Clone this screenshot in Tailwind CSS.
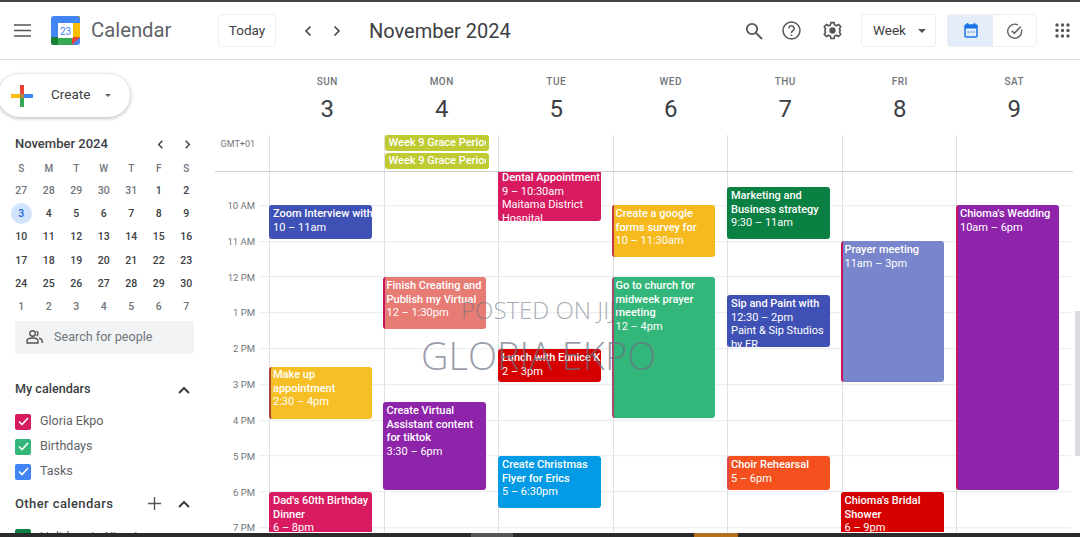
<!DOCTYPE html>
<html lang="en">
<head>
  <meta charset="UTF-8" />
  <title>Calendar</title>
  <script src="https://cdn.jsdelivr.net/npm/@tailwindcss/browser@4"></script>
</head>
<body class="bg-white font-['Roboto',sans-serif] text-[#3c4043] w-[1080px] h-[537px] overflow-hidden relative">
  <div class="h-[2px] bg-[#444]"></div>

  <!-- top bar -->
  <header class="h-[58px] border-b border-[#e0e0e0] flex items-center relative">
    <svg class="ml-[13px] w-[19px] h-[19px]" viewBox="0 0 19 19" fill="none" stroke="#555" stroke-width="1.7"><path d="M1 4h17M1 9.500h17M1 15h17"/></svg>
    <svg class="ml-[19px] w-[29px] h-[29px]" viewBox="0 0 29 29">
      <rect x="0" y="0" width="29" height="29" rx="3" fill="#4285f4"/>
      <rect x="21" y="0" width="8" height="22" fill="#fbbc04"/>
      <rect x="0" y="21" width="22" height="8" rx="2" fill="#34a853"/>
      <path d="M0 21h7v8H3a3 3 0 0 1-3-3z" fill="#188038"/>
      <path d="M7 0h19a3 3 0 0 1 3 3v4H7z" fill="#4285f4"/>
      <path d="M21 21h8l-8 8z" fill="#ea4335"/>
      <rect x="7" y="7" width="15" height="15" fill="#fff"/>
      <text x="14.500" y="18.500" font-size="10" text-anchor="middle" fill="#4285f4" font-family="Roboto">23</text>
    </svg>
    <span class="ml-[11px] text-[20.300px] text-[#5f6368] w-[128px] leading-none">Calendar</span>
    <button class="ml-[-1px] w-[58px] h-[33px] border border-[#eeeeee] rounded-[3px] text-[13.500px] text-[#3c4043]">Today</button>
    <svg class="ml-[25px] w-[14px] h-[14px]" viewBox="0 0 14 14" fill="none" stroke="#444" stroke-width="1.600"><path d="M9.500 2.500 5 7l4.500 4.500"/></svg>
    <svg class="ml-[15px] w-[14px] h-[14px]" viewBox="0 0 14 14" fill="none" stroke="#444" stroke-width="1.600"><path d="M4.500 2.500 9 7l-4.500 4.500"/></svg>
    <span class="ml-[25px] text-[20px] text-[#3c4043] leading-none">November 2024</span>
    <div class="ml-auto flex items-center">
      <svg class="ml-[-1px] w-[18px] h-[18px]" viewBox="0 0 18 18" fill="none" stroke="#555" stroke-width="1.800"><circle cx="7" cy="7" r="5.200"/><path d="m11 11 6 6"/></svg>
      <svg class="ml-[19px] w-[19px] h-[19px]" viewBox="0 0 19 19" fill="none" stroke="#555" stroke-width="1.500"><circle cx="9.500" cy="9.500" r="8.500"/><path d="M6.800 7.500a2.700 2.700 0 1 1 4.200 2.200c-1 .7-1.500 1.200-1.500 2.300"/><path d="M9.500 13.500v1.500"/></svg>
      <svg class="ml-[22px] w-[19px] h-[19px]" viewBox="0 0 24 24" fill="none" stroke="#555" stroke-width="2"><path d="M10 2h4l.6 3 2.400 1 2.600-1.600 2.800 2.800L20.800 10l.9 2-.9 2 1.600 2.800-2.800 2.800L17 18l-2.400 1-.6 3h-4l-.6-3L7 18l-2.600 1.600-2.800-2.800L3.200 14l-.9-2 .9-2-1.600-2.800 2.800-2.800L7 6l2.400-1z"/><circle cx="12" cy="12" r="3" fill="#555"/></svg>
      <div class="ml-[19px] w-[75px] h-[33px] border border-[#eeeeee] rounded-[3px] flex items-center pl-[11px] text-[13.500px]">Week<span class="ml-[12px] w-0 h-0 border-x-[4px] border-x-transparent border-t-[4px] border-t-[#555]"></span></div>
      <div class="ml-[11px] w-[90px] h-[33px] border border-[#eeeeee] rounded-[3px] flex overflow-hidden">
        <div class="w-[45px] bg-[#e4edf9] flex items-center justify-center">
          <svg class="w-[14px] h-[15px]" viewBox="0 0 14 15" fill="none"><rect x="1" y="2" width="12" height="12" rx="1" stroke="#1a73e8" stroke-width="1.500"/><rect x="1" y="2" width="12" height="3.500" fill="#1a73e8"/><path d="M3.500 0v3M10.500 0v3" stroke="#1a73e8" stroke-width="1.500"/><path d="M3.500 9h1.500M6.300 9h1.500M9 9h1.500" stroke="#1a73e8" stroke-width="1.200"/></svg>
        </div>
        <div class="flex-1 flex items-center justify-center">
          <svg class="w-[16px] h-[16px]" viewBox="0 0 16 16" fill="none" stroke="#666" stroke-width="1.400"><path d="M14.500 6.500A7 7 0 1 1 11 2"/><path d="m4.800 7.800 2.500 2.500 6.500-6.800" stroke-width="1.600"/></svg>
        </div>
      </div>
      <svg class="ml-[18px] mr-[10px] w-[15px] h-[15px]" viewBox="0 0 15 15" fill="#555"><circle cx="2" cy="2" r="1.700"/><circle cx="7.500" cy="2" r="1.700"/><circle cx="13" cy="2" r="1.700"/><circle cx="2" cy="7.500" r="1.700"/><circle cx="7.500" cy="7.500" r="1.700"/><circle cx="13" cy="7.500" r="1.700"/><circle cx="2" cy="13" r="1.700"/><circle cx="7.500" cy="13" r="1.700"/><circle cx="13" cy="13" r="1.700"/></svg>
    </div>
  </header>

  <div class="flex h-[477px]">
    <!-- sidebar -->
    <aside class="w-[215px] shrink-0 overflow-hidden">
      <div class="mt-[14px] ml-[-2px] w-[132px] h-[43px] rounded-full bg-white shadow-[0_1px_4px_rgba(60,64,67,0.4)] flex items-center">
        <svg class="ml-[13px] w-[22px] h-[22px]" viewBox="0 0 22 22"><rect x="9" y="0" width="4" height="9" fill="#ea4335"/><rect x="9" y="13" width="4" height="9" fill="#34a853"/><rect x="0" y="9" width="9" height="4" fill="#fbbc04"/><rect x="13" y="9" width="9" height="4" fill="#4285f4"/><rect x="9" y="9" width="4" height="4" fill="#b0854a"/></svg>
        <span class="ml-[18px] mt-[-2px] text-[13.500px] text-[#3c4043]">Create</span>
        <span class="ml-[15px] w-0 h-0 border-x-[3.500px] border-x-transparent border-t-[3.500px] border-t-[#666]"></span>
      </div>

      <div class="mt-[17px] pl-[15px] pr-[22px] h-[20px] flex items-center">
        <span class="text-[13px] font-medium text-[#3c4043]">November 2024</span>
        <svg class="ml-auto w-[11px] h-[11px]" viewBox="0 0 12 12" fill="none" stroke="#444" stroke-width="1.600"><path d="M8 2 4 6l4 4"/></svg>
        <svg class="ml-[16px] w-[11px] h-[11px]" viewBox="0 0 12 12" fill="none" stroke="#444" stroke-width="1.600"><path d="m4 2 4 4-4 4"/></svg>
      </div>

      <div class="mt-[3px] ml-[7.500px] w-[192.500px] h-[22px] grid grid-cols-7 text-center text-[10px] font-medium text-[#70757a] items-center">
        <span>S</span><span>M</span><span>T</span><span>W</span><span>T</span><span>F</span><span>S</span>
      </div>
      <div class="ml-[7.500px] w-[192.500px] grid grid-cols-7 text-center text-[10.500px] font-medium text-[#3c4043] auto-rows-[23.300px] items-center">
        <span class="text-[#70757a]">27</span><span class="text-[#70757a]">28</span><span class="text-[#70757a]">29</span><span class="text-[#70757a]">30</span><span class="text-[#70757a]">31</span><span>1</span><span>2</span>
        <span class="mx-auto w-[21px] h-[21px] rounded-full bg-[#d2e3fc] text-[#1967d2] flex items-center justify-center">3</span><span>4</span><span>5</span><span>6</span><span>7</span><span>8</span><span>9</span>
        <span>10</span><span>11</span><span>12</span><span>13</span><span>14</span><span>15</span><span>16</span>
        <span>17</span><span>18</span><span>19</span><span>20</span><span>21</span><span>22</span><span>23</span>
        <span>24</span><span>25</span><span>26</span><span>27</span><span>28</span><span>29</span><span>30</span>
        <span class="text-[#70757a]">1</span><span class="text-[#70757a]">2</span><span class="text-[#70757a]">3</span><span class="text-[#70757a]">4</span><span class="text-[#70757a]">5</span><span class="text-[#70757a]">6</span><span class="text-[#70757a]">7</span>
      </div>

      <div class="mt-[2px] ml-[15px] w-[179px] h-[33px] bg-[#f1f3f4] rounded-[3px] flex items-center pl-[11px] text-[12.600px] text-[#70757a]">
        <svg class="w-[17px] h-[14px]" viewBox="0 0 17 14" fill="none" stroke="#555" stroke-width="1.400"><circle cx="6.500" cy="3.500" r="2.800"/><path d="M1 13v-2c0-2 2.500-3 5.500-3s5.500 1 5.500 3v2z"/><path d="M10.500 1a2.800 2.800 0 0 1 0 5M13 8.300c2 .4 3.200 1.300 3.200 2.700v2"/></svg>
        <span class="ml-[11px]">Search for people</span>
      </div>

      <div class="mt-[27px] pl-[15px] pr-[25px] h-[18px] flex items-center text-[12.600px] font-medium">
        <span>My calendars</span>
        <svg class="ml-auto w-[12px] h-[8px]" viewBox="0 0 12 8" fill="none" stroke="#333" stroke-width="1.800"><path d="m1 7 5-5 5 5"/></svg>
      </div>
      <ul class="mt-[15px] pl-[15px] flex flex-col gap-[9px] text-[12.500px] text-[#5f6368]">
        <li class="flex items-center h-[16px]"><span class="w-[16px] h-[16px] rounded-[2px] bg-[#d81b60] flex items-center justify-center"><svg class="w-[11px] h-[9px]" viewBox="0 0 11 9" fill="none" stroke="#fff" stroke-width="1.600"><path d="m1 4.500 3 3 6-6.500"/></svg></span><span class="ml-[9px]">Gloria Ekpo</span></li>
        <li class="flex items-center h-[16px]"><span class="w-[16px] h-[16px] rounded-[2px] bg-[#33b679] flex items-center justify-center"><svg class="w-[11px] h-[9px]" viewBox="0 0 11 9" fill="none" stroke="#fff" stroke-width="1.600"><path d="m1 4.500 3 3 6-6.500"/></svg></span><span class="ml-[9px]">Birthdays</span></li>
        <li class="flex items-center h-[16px]"><span class="w-[16px] h-[16px] rounded-[2px] bg-[#4285f4] flex items-center justify-center"><svg class="w-[11px] h-[9px]" viewBox="0 0 11 9" fill="none" stroke="#fff" stroke-width="1.600"><path d="m1 4.500 3 3 6-6.500"/></svg></span><span class="ml-[9px]">Tasks</span></li>
      </ul>
      <div class="mt-[15px] pl-[15px] pr-[25px] h-[18px] flex items-center text-[13px] tracking-[0.4px] font-medium">
        <span>Other calendars</span>
        <svg class="ml-auto w-[13px] h-[13px]" viewBox="0 0 13 13" fill="none" stroke="#555" stroke-width="1.400"><path d="M6.500 0v13M0 6.500h13"/></svg>
        <svg class="ml-[17px] w-[12px] h-[8px]" viewBox="0 0 12 8" fill="none" stroke="#333" stroke-width="1.800"><path d="m1 7 5-5 5 5"/></svg>
      </div>
      <div class="mt-[15px] pl-[15px] flex items-center text-[12.500px] text-[#5f6368]"><span class="w-[16px] h-[16px] rounded-[2px] bg-[#0b8043]"></span><span class="ml-[9px]">Holidays in Nigeria</span></div>
    </aside>

    <!-- week -->
    <section class="flex-1 min-w-0 relative">
      <div class="ml-[55px] w-[801.500px] grid grid-cols-7 h-[75px] text-center">
        <div class="pt-[15px]"><div class="text-[10px] font-medium tracking-[0.5px] text-[#70757a] leading-[13px]">SUN</div><div class="mt-[4px] text-[24px] leading-[34px]">3</div></div>
        <div class="pt-[15px]"><div class="text-[10px] font-medium tracking-[0.5px] text-[#70757a] leading-[13px]">MON</div><div class="mt-[4px] text-[24px] leading-[34px]">4</div></div>
        <div class="pt-[15px]"><div class="text-[10px] font-medium tracking-[0.5px] text-[#70757a] leading-[13px]">TUE</div><div class="mt-[4px] text-[24px] leading-[34px]">5</div></div>
        <div class="pt-[15px]"><div class="text-[10px] font-medium tracking-[0.5px] text-[#70757a] leading-[13px]">WED</div><div class="mt-[4px] text-[24px] leading-[34px]">6</div></div>
        <div class="pt-[15px]"><div class="text-[10px] font-medium tracking-[0.5px] text-[#70757a] leading-[13px]">THU</div><div class="mt-[4px] text-[24px] leading-[34px]">7</div></div>
        <div class="pt-[15px]"><div class="text-[10px] font-medium tracking-[0.5px] text-[#70757a] leading-[13px]">FRI</div><div class="mt-[4px] text-[24px] leading-[34px]">8</div></div>
        <div class="pt-[15px]"><div class="text-[10px] font-medium tracking-[0.5px] text-[#70757a] leading-[13px]">SAT</div><div class="mt-[4px] text-[24px] leading-[34px]">9</div></div>
      </div>

      <!-- all day row -->
      <div class="flex h-[36px]">
        <div class="w-[54px] pr-[14px] pt-[2px] text-right text-[9px] leading-[14px] text-[#70757a]">GMT+01</div>
        <div class="w-[801.500px] grid grid-cols-7">
          <div class="border-l border-[#e0e0e0]"></div>
          <div class="border-l border-[#e0e0e0] pt-[0px] flex flex-col gap-[2px]">
            <div class="w-[104px] h-[16px] rounded-[3px] bg-[#c0ca33] text-white text-[11px] font-medium leading-[16px] pl-[4px] pr-[3px]"><div class="overflow-hidden whitespace-nowrap">Week 9 Grace Period</div></div>
            <div class="w-[104px] h-[16px] rounded-[3px] bg-[#c0ca33] text-white text-[11px] font-medium leading-[16px] pl-[4px] pr-[3px]"><div class="overflow-hidden whitespace-nowrap">Week 9 Grace Period</div></div>
          </div>
          <div class="border-l border-[#e0e0e0]"></div>
          <div class="border-l border-[#e0e0e0]"></div>
          <div class="border-l border-[#e0e0e0]"></div>
          <div class="border-l border-[#e0e0e0]"></div>
          <div class="border-l border-[#e0e0e0]"></div>
        </div>
      </div>

      <!-- timed grid, clipped at 171 -->
      <div class="h-[361px] border-t border-[#cfcfcf] overflow-hidden flex w-[858px]">
        <div class="w-[54px] shrink-0 relative text-[9.500px] text-[#70757a] text-right">
          <span class="absolute right-[14px] top-[28px] leading-[12px]">10 AM</span>
          <span class="absolute right-[14px] top-[64px] leading-[12px]">11 AM</span>
          <span class="absolute right-[14px] top-[100px] leading-[12px]">12 PM</span>
          <span class="absolute right-[14px] top-[135px] leading-[12px]">1 PM</span>
          <span class="absolute right-[14px] top-[171px] leading-[12px]">2 PM</span>
          <span class="absolute right-[14px] top-[207px] leading-[12px]">3 PM</span>
          <span class="absolute right-[14px] top-[243px] leading-[12px]">4 PM</span>
          <span class="absolute right-[14px] top-[279px] leading-[12px]">5 PM</span>
          <span class="absolute right-[14px] top-[315px] leading-[12px]">6 PM</span>
          <span class="absolute right-[14px] top-[350px] leading-[12px]">7 PM</span>
          <div class="absolute right-0 top-0 bottom-0 w-[10px] bg-[repeating-linear-gradient(to_bottom,transparent_0,transparent_34.800px,#e8eaed_34.800px,#e8eaed_35.800px)] bg-[position:0_-1.800px]"></div>
        </div>
        <div class="w-[801.500px] grid grid-cols-7 relative bg-[repeating-linear-gradient(to_bottom,transparent_0,transparent_34.800px,#e8eaed_34.800px,#e8eaed_35.800px)] bg-[position:0_-1.800px]">
          <!-- SUN -->
          <div class="relative border-l border-[#e0e0e0]">
            <div class="absolute left-[-1px] w-[103px] top-[33px] h-[34px] rounded-[3px] bg-[#3f51b5] text-white text-[11px] leading-[13.500px] font-medium pl-[4px] pt-[2px] overflow-hidden"><div class="whitespace-nowrap">Zoom Interview with</div><div class="font-normal">10 – 11am</div></div>
            <div class="absolute left-[-1px] w-[103px] top-[195px] h-[52px] rounded-[3px] bg-[#f6bf26] border-l-2 border-[#a8453a] text-white text-[11px] leading-[13.500px] font-medium pl-[2px] pt-[1px] overflow-hidden"><div>Make up appointment</div><div class="font-normal">2:30 – 4pm</div></div>
            <div class="absolute left-[-1px] w-[103px] top-[320px] h-[60px] rounded-[3px] bg-[#d81b60] text-white text-[11px] leading-[13.500px] font-medium pl-[4px] pt-[2px] overflow-hidden"><div>Dad's 60th Birthday Dinner</div><div class="font-normal">6 – 8pm</div></div>
          </div>
          <!-- MON -->
          <div class="relative border-l border-[#e0e0e0]">
            <div class="absolute left-[-2px] w-[103px] top-[105px] h-[52px] rounded-[3px] bg-[#e67c73] border-l-2 border-[#c2185b] text-white text-[11px] leading-[13.500px] font-medium pl-[2px] pt-[2px] overflow-hidden"><div>Finish Creating and Publish my Virtual</div><div class="font-normal">12 – 1:30pm</div></div>
            <div class="absolute left-[-2px] w-[103px] top-[230px] h-[88px] rounded-[3px] bg-[#8e24aa] text-white text-[11px] leading-[13.500px] font-medium pl-[4px] pt-[2px] overflow-hidden"><div>Create Virtual Assistant content for tiktok</div><div class="font-normal">3:30 – 6pm</div></div>
          </div>
          <!-- TUE -->
          <div class="relative border-l border-[#e0e0e0]">
            <div class="absolute left-[-1px] w-[103px] top-[-1px] h-[50px] rounded-b-[3px] bg-[#d81b60] text-white text-[11px] leading-[13.500px] font-medium pl-[4px] pt-[0px] overflow-hidden"><div>Dental Appointment</div><div class="font-normal">9 – 10:30am</div><div class="font-normal">Maitama District Hospital</div></div>
            <div class="absolute left-[-1px] w-[103px] top-[177px] h-[33px] rounded-[3px] bg-[#d50000] text-white text-[11px] leading-[13.500px] font-medium pl-[4px] pt-[2px] overflow-hidden"><div class="whitespace-nowrap">Lunch with Eunice K</div><div class="font-normal">2 – 3pm</div></div>
            <div class="absolute left-[-1px] w-[103px] top-[284px] h-[52px] rounded-[3px] bg-[#039be5] text-white text-[11px] leading-[13.500px] font-medium pl-[4px] pt-[2px] overflow-hidden"><div>Create Christmas Flyer for Erics</div><div class="font-normal">5 – 6:30pm</div></div>
          </div>
          <!-- WED -->
          <div class="relative border-l border-[#e0e0e0]">
            <div class="absolute left-[-2px] w-[103px] top-[33px] h-[52px] rounded-[3px] bg-[#f6b91e] border-l-2 border-[#c0393f] text-white text-[11px] leading-[13.500px] font-medium pl-[2px] pt-[2px] overflow-hidden"><div>Create a google forms survey for</div><div class="font-normal">10 – 11:30am</div></div>
            <div class="absolute left-[-2px] w-[103px] top-[105px] h-[141px] rounded-[3px] bg-[#33b679] border-l-2 border-[#a8476a] text-white text-[11px] leading-[13.500px] font-medium pl-[2px] pt-[2px] overflow-hidden"><div>Go to church for midweek prayer meeting</div><div class="font-normal">12 – 4pm</div></div>
          </div>
          <!-- THU -->
          <div class="relative border-l border-[#e0e0e0]">
            <div class="absolute left-[-1px] w-[103px] top-[15px] h-[52px] rounded-[3px] bg-[#0b8043] text-white text-[11px] leading-[13.500px] font-medium pl-[4px] pt-[2px] overflow-hidden"><div>Marketing and Business strategy</div><div class="font-normal">9:30 – 11am</div></div>
            <div class="absolute left-[-1px] w-[103px] top-[123px] h-[52px] rounded-[3px] bg-[#3f51b5] text-white text-[11px] leading-[13.500px] font-medium pl-[4px] pt-[2px] overflow-hidden"><div>Sip and Paint with</div><div class="font-normal">12:30 – 2pm</div><div class="font-normal">Paint &amp; Sip Studios by ER</div></div>
            <div class="absolute left-[-1px] w-[103px] top-[284px] h-[34px] rounded-[3px] bg-[#f4511e] border-l-2 border-[#d84a4a] text-white text-[11px] leading-[13.500px] font-medium pl-[2px] pt-[2px] overflow-hidden"><div>Choir Rehearsal</div><div class="font-normal">5 – 6pm</div></div>
          </div>
          <!-- FRI -->
          <div class="relative border-l border-[#e0e0e0]">
            <div class="absolute left-[-2px] w-[103px] top-[69px] h-[141px] rounded-[3px] bg-[#7986cb] border-l-2 border-[#c2185b] text-white text-[11px] leading-[13.500px] font-medium pl-[2px] pt-[2px] overflow-hidden"><div>Prayer meeting</div><div class="font-normal">11am – 3pm</div></div>
            <div class="absolute left-[-2px] w-[103px] top-[320px] h-[60px] rounded-[3px] bg-[#d50000] text-white text-[11px] leading-[13.500px] font-medium pl-[4px] pt-[2px] overflow-hidden"><div>Chioma's Bridal Shower</div><div class="font-normal">6 – 9pm</div></div>
          </div>
          <!-- SAT -->
          <div class="relative border-l border-[#e0e0e0]">
            <div class="absolute left-[-1px] w-[103px] top-[33px] h-[285px] rounded-[3px] bg-[#8e24aa] border-l-2 border-[#c2185b] text-white text-[11px] leading-[13.500px] font-medium pl-[2px] pt-[2px] overflow-hidden"><div>Chioma's Wedding</div><div class="font-normal">10am – 6pm</div></div>
          </div>
        </div>
      </div>
    </section>
  </div>

  <!-- scrollbar -->
  <div class="absolute right-0 top-[311px] w-[5px] h-[145px] bg-[#dadce0]"></div>

  <!-- watermark -->
  <div class="absolute left-[461px] top-[295px] text-[24px] leading-[30px] font-light font-['Open_Sans',sans-serif] text-gray-500/60 whitespace-nowrap">POSTED ON JIJI</div>
  <div class="absolute left-[421px] top-[332px] text-[38px] leading-[46px] font-light font-['Open_Sans',sans-serif] text-gray-500/70 whitespace-nowrap">GLORIA EKPO</div>

  <!-- bottom strip -->
  <div class="absolute left-0 right-0 bottom-0 h-[4px] bg-[#2b2b2b] flex">
    <span class="ml-[471px] w-[42px] bg-[#555]"></span>
    <span class="ml-[181px] w-[44px] bg-[#b5701f]"></span>
  </div>
</body>
</html>
